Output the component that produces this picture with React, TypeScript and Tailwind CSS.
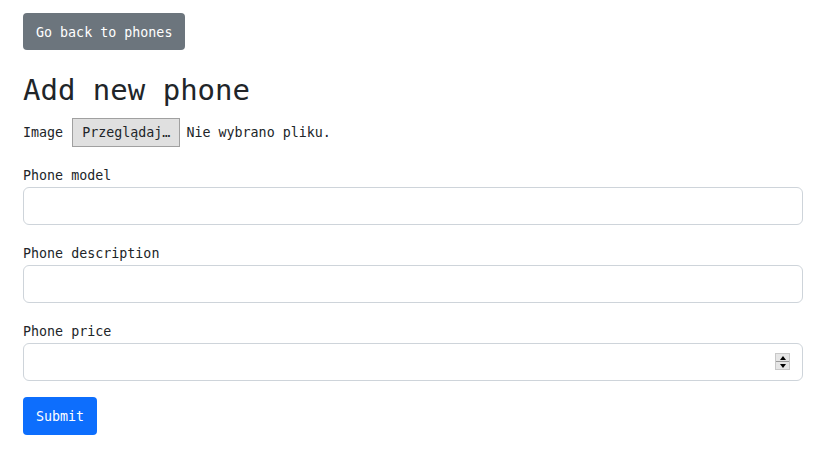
const fields = [
  { label: 'Phone model', spinner: false },
  { label: 'Phone description', spinner: false },
  { label: 'Phone price', spinner: true },
];

const App = () => {
  return (
    <div className="min-h-screen bg-white pl-[23px] pr-[33px] pt-[13px] text-[13.33px] text-[#212529] font-['DejaVu_Sans_Mono',monospace]">
      <button className="h-[37px] px-[13px] pt-[3px] rounded-[4px] bg-[#6c757d] text-white leading-[20px]">
        Go back to phones
      </button>

      <h1 className="mt-[23px] mb-[10px] text-[29px] leading-[35px]">Add new phone</h1>

      {/* File input, drawn by hand so the Polish labels stay */}
      <div className="flex items-center h-[29px] mb-[19px]">
        <span className="mr-[9px]">Image</span>
        <span className="h-[29px] flex items-center px-[9px] bg-[#e0e0e0] border border-[#a0a0a0]">
          Przeglądaj…
        </span>
        <span className="ml-[6px]">Nie wybrano pliku.</span>
      </div>

      <form className="flex flex-col gap-[16px]" onSubmit={(e) => e.preventDefault()}>
        <div className="flex flex-col gap-[19px]">
          {fields.map((field) => (
            <div key={field.label}>
              <label className="block leading-[20px] mb-[1px] pt-[1px] -mt-[1px]">{field.label}</label>
              <div className="relative">
                <input
                  type="text"
                  className="block w-full h-[38px] rounded-[6px] border border-[#ced4da] bg-white px-3 outline-none"
                />
                {field.spinner && (
                  <div className="absolute right-[13px] top-[10px] w-[15px] h-[17px] bg-[#e6e6e6] border border-[#c8c8c8] flex flex-col">
                    <div className="flex-1 flex items-center justify-center border-b border-[#9a9a9a]">
                      <div className="w-0 h-0 border-l-[3px] border-r-[3px] border-b-[4px] border-l-transparent border-r-transparent border-b-black" />
                    </div>
                    <div className="flex-1 flex items-center justify-center">
                      <div className="w-0 h-0 border-l-[3px] border-r-[3px] border-t-[4px] border-l-transparent border-r-transparent border-t-black" />
                    </div>
                  </div>
                )}
              </div>
            </div>
          ))}
        </div>

        <div>
          <button type="submit" className="h-[38px] px-[13px] pt-[2px] rounded-[4px] bg-[#0d6efd] text-white leading-[20px]">
            Submit
          </button>
        </div>
      </form>
    </div>
  );
};

export default App;
